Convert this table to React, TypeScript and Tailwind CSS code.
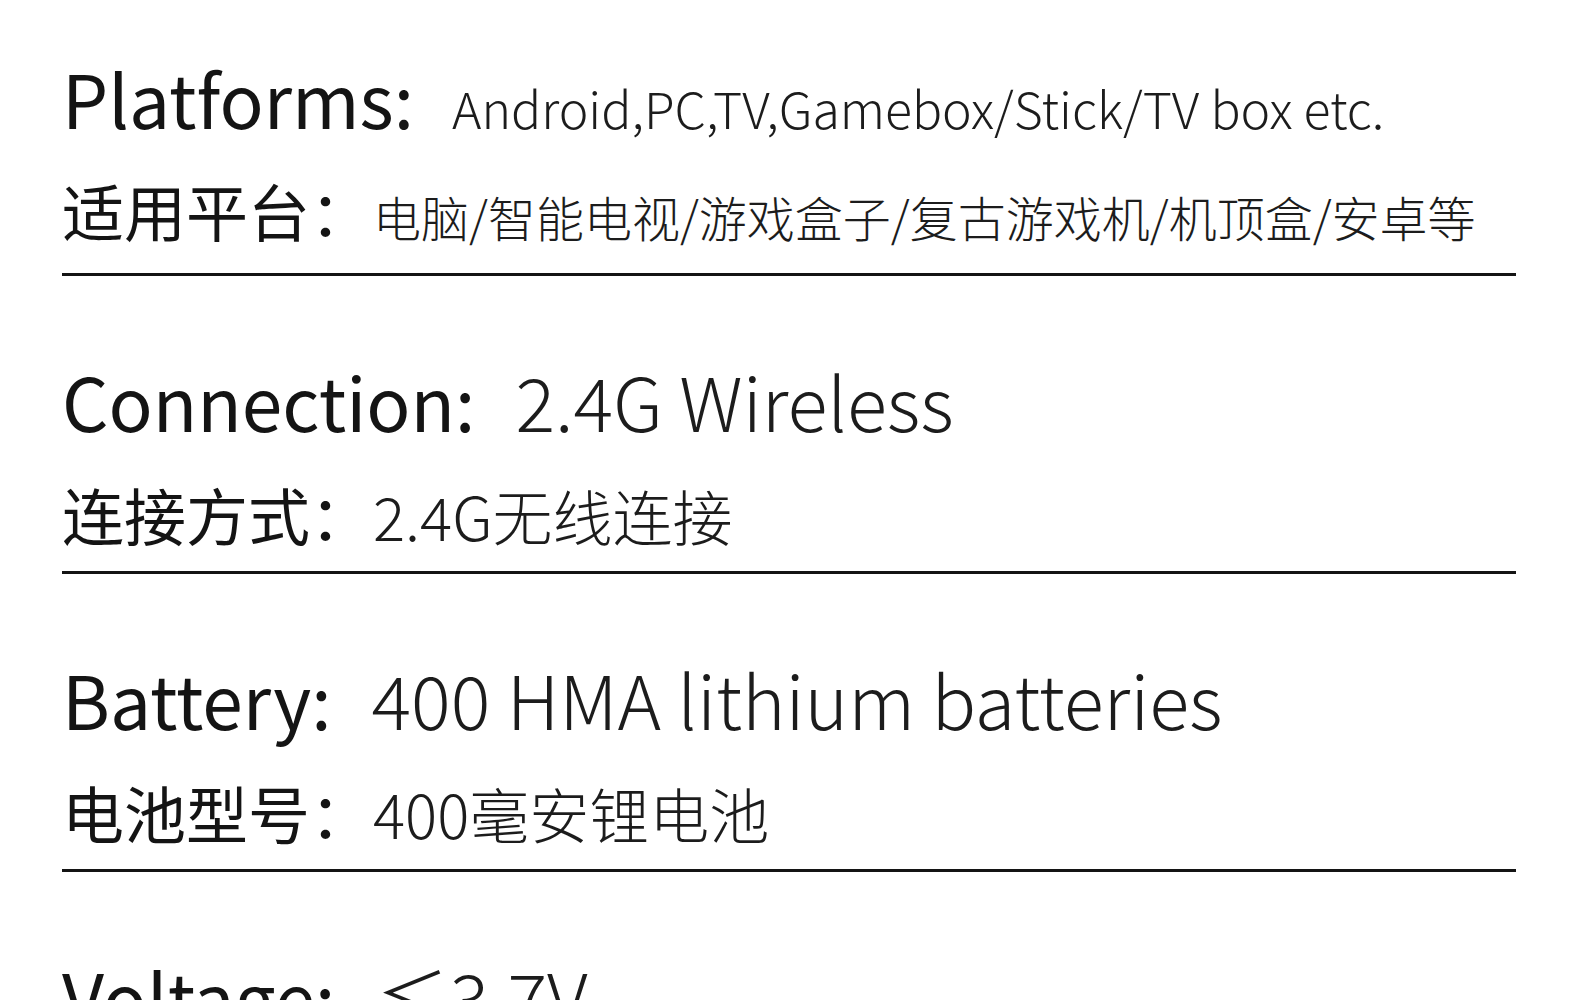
const font = { fontFamily: "'Noto Sans CJK SC', 'Noto Sans', sans-serif" };

interface Spec {
  label: string;
  value: string;
  cnLabel: string;
  cnValue: string;
  small?: boolean;
}

const specs: Spec[] = [
  {
    label: "Platforms:",
    value: "Android,PC,TV,Gamebox/Stick/TV box etc.",
    cnLabel: "适用平台：",
    cnValue: "电脑/智能电视/游戏盒子/复古游戏机/机顶盒/安卓等",
    small: true,
  },
  { label: "Connection:", value: "2.4G Wireless", cnLabel: "连接方式：", cnValue: "2.4G无线连接" },
  { label: "Battery:", value: "400 HMA lithium batteries", cnLabel: "电池型号：", cnValue: "400毫安锂电池" },
];

function SpecBlock({ s }: { s: Spec }) {
  return (
    <div className="border-b-[3px] border-[#141414]">
      {/* english line */}
      <div className="flex items-baseline h-[80px]">
        <span className="text-[73px] leading-[80px] text-[#141414]">{s.label}</span>
        <span
          className={
            s.small
              ? "ml-[38px] text-[50px] leading-[80px] font-light text-[#1c1c1c]"
              : "ml-[40px] text-[74px] leading-[80px] font-light text-[#1c1c1c]"
          }
        >
          {s.value}
        </span>
      </div>
      {/* chinese line */}
      <div className={s.small ? "flex items-baseline mt-[33px] h-[80px]" : "flex items-baseline mt-[34px] h-[80px]"}>
        <span className="text-[62px] leading-[80px] text-[#141414] w-[311px] shrink-0 whitespace-nowrap">
          {s.cnLabel}
        </span>
        <span
          className={
            s.small
              ? "text-[48px] leading-[80px] font-light text-[#1c1c1c] whitespace-nowrap"
              : "text-[60px] leading-[80px] font-light text-[#1c1c1c] whitespace-nowrap"
          }
        >
          {s.cnValue}
        </span>
      </div>
      <div className={s.small ? "h-[23px]" : "h-[17px]"} />
    </div>
  );
}

export default function App() {
  return (
    <div className="w-[1580px] h-[1000px] overflow-hidden bg-white" style={font}>
      <div className="pl-[62px] pr-[64px] pt-[57px] flex flex-col gap-[84px]">
        {specs.map((s) => (
          <SpecBlock key={s.label} s={s} />
        ))}
        <div className="flex items-baseline h-[80px]">
          <span className="text-[73px] leading-[80px] text-[#141414]">Voltage:</span>
          <span className="ml-[40px] text-[74px] leading-[80px] font-light text-[#1c1c1c]">≤3.7V</span>
        </div>
      </div>
    </div>
  );
}
